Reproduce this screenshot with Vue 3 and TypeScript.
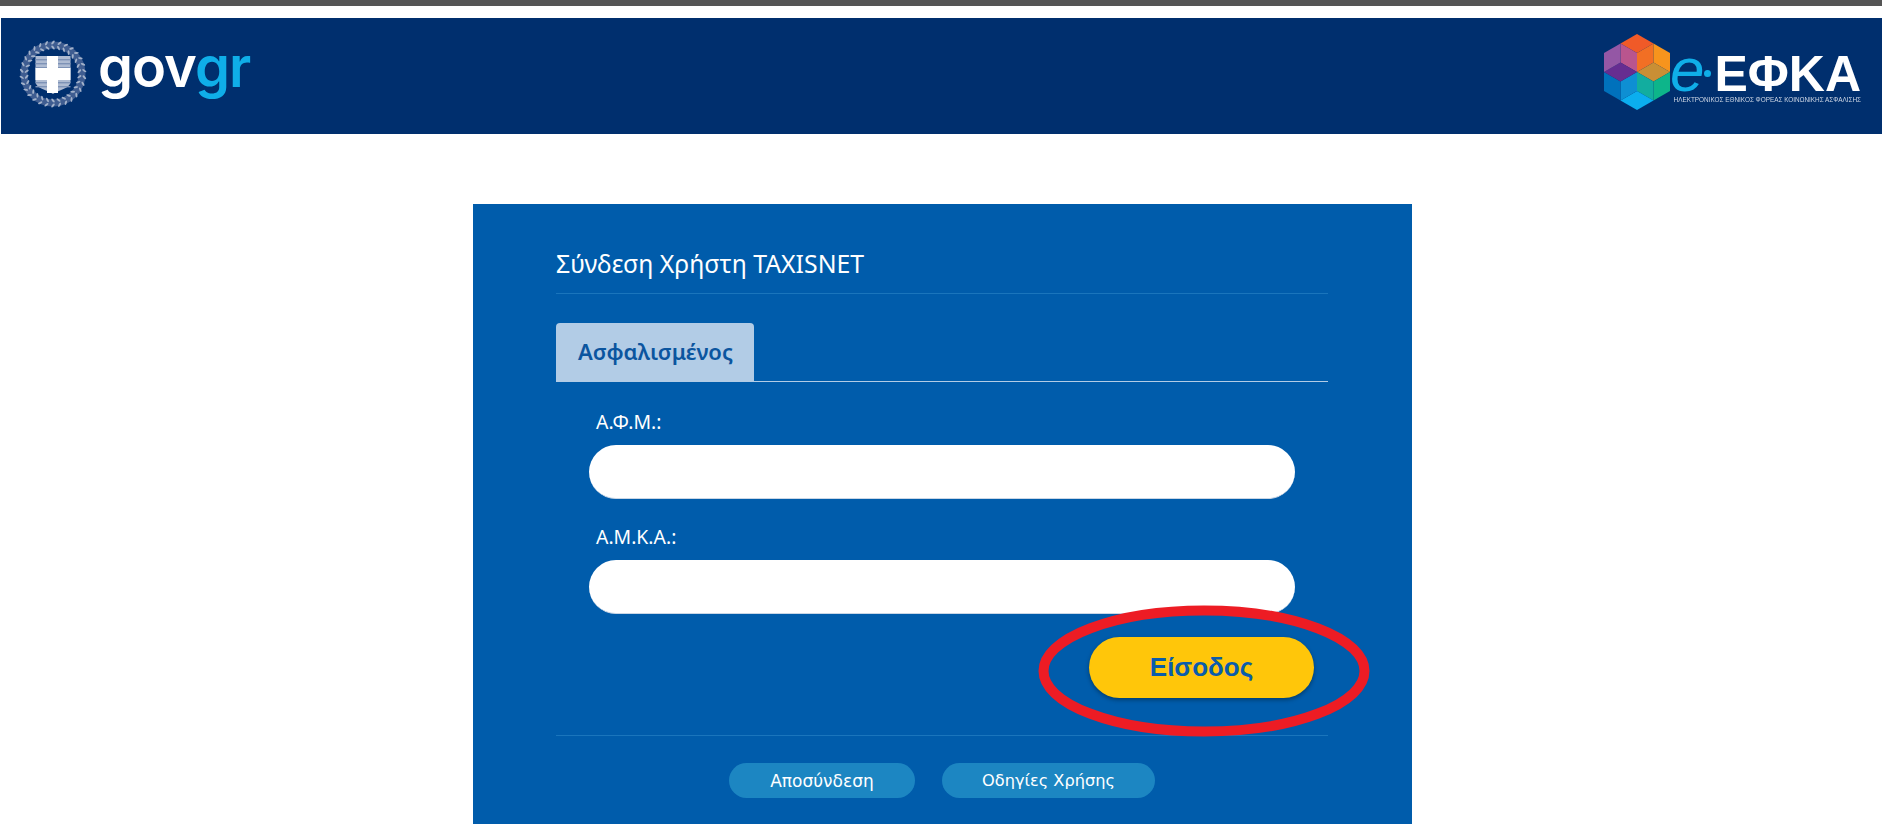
<script setup lang="ts">
const facets = [
  { points: '0,-38 16.5,-28.5 0,-19 -16.5,-28.5', fill: '#f05a28' },
  { points: '-16.5,-28.5 0,-19 0,0 -16.5,-9.5', fill: '#b9558e' },
  { points: '16.5,-28.5 0,-19 0,0 16.5,-9.5', fill: '#f26f24' },
  { points: '16.5,-28.5 33,-19 33,0 16.5,-9.5', fill: '#f7941d' },
  { points: '0,0 16.5,-9.5 33,0 16.5,9.5', fill: '#c98f35' },
  { points: '33,0 33,19 16.5,28.5 16.5,9.5', fill: '#0db58a' },
  { points: '0,0 16.5,9.5 16.5,28.5 0,19', fill: '#12ad9f' },
  { points: '0,38 16.5,28.5 0,19 -16.5,28.5', fill: '#0baeef' },
  { points: '0,0 0,19 -16.5,28.5 -16.5,9.5', fill: '#0e8fd3' },
  { points: '-33,0 -16.5,9.5 -16.5,28.5 -33,19', fill: '#0071bc' },
  { points: '0,0 -16.5,9.5 -33,0 -16.5,-9.5', fill: '#662d91' },
  { points: '-33,-19 -16.5,-28.5 -16.5,-9.5 -33,0', fill: '#9457a5' },
]

const leaves = Array.from({ length: 30 }, (_, i) => (i * 360) / 30)
const stripes = [-15, -11, -7, 8, 12]
</script>

<template>
  <div class="page">
    <div class="topbar"></div>
    <header class="header">
      <div class="gov-logo">
        <svg class="emblem" width="68" height="68" viewBox="-34 -34 68 68">
          <circle r="29" fill="none" stroke="#3f5d91" stroke-width="7" />
          <g v-for="a in leaves" :key="a" :transform="`rotate(${a})`" fill="#a3b2ca">
            <ellipse cx="0" cy="-31.5" rx="1" ry="2.4" transform="rotate(40 0 -31.5)" />
            <ellipse cx="0" cy="-26.5" rx="1" ry="2.4" transform="rotate(-40 0 -26.5)" />
          </g>
          <path d="M-17.5 -18H17.5V8C17.5 14 6 16 0 20C-6 16 -17.5 14 -17.5 8Z" fill="#aebbd2" />
          <rect v-for="y in stripes" :key="y" x="-17.5" :y="y" width="35" height="1.4" fill="#7d92b6" />
          <path d="M-6 -18H5V-6H17.5V6H5V19H-6V6H-17.5V-6H-6Z" fill="#fff" />
        </svg>
        <span class="gov-word">gov<span class="gov-gr">gr</span></span>
      </div>
      <div class="efka-logo">
        <svg class="hex" width="68" height="78" viewBox="-34 -39 68 78">
          <polygon v-for="f in facets" :key="f.points" :points="f.points" :fill="f.fill" />
        </svg>
        <div class="efka-text">
          <div class="efka-word"><span class="efka-e">e</span><span class="efka-dot"></span>ΕΦΚΑ</div>
          <div class="efka-sub">ΗΛΕΚΤΡΟΝΙΚΟΣ ΕΘΝΙΚΟΣ ΦΟΡΕΑΣ ΚΟΙΝΩΝΙΚΗΣ ΑΣΦΑΛΙΣΗΣ</div>
        </div>
      </div>
    </header>

    <main class="panel">
      <h1 class="title">Σύνδεση Χρήστη TAXISNET</h1>
      <div class="tabs">
        <div class="tab">Ασφαλισμένος</div>
      </div>
      <form class="form" @submit.prevent>
        <label class="label" for="afm">Α.Φ.Μ.:</label>
        <input id="afm" class="field" type="text" />
        <label class="label" for="amka">Α.Μ.Κ.Α.:</label>
        <input id="amka" class="field" type="text" />
        <div class="submit-row">
          <button class="submit" type="submit">Είσοδος</button>
          <svg class="ring" width="332" height="132" viewBox="0 0 332 132">
            <ellipse cx="166" cy="66" rx="160.5" ry="60.5" fill="none" stroke="#ed1c24" stroke-width="10" />
          </svg>
        </div>
      </form>
      <footer class="actions">
        <button class="action logout" type="button">Αποσύνδεση</button>
        <button class="action guide" type="button">Οδηγίες Χρήσης</button>
      </footer>
    </main>
  </div>
</template>

<style scoped>
.page {
  width: 1882px;
  height: 838px;
  overflow: hidden;
  background: #fff;
  font-family: "Noto Sans", "Open Sans", sans-serif;
}
.topbar {
  height: 6px;
  background: #555;
}
.header {
  height: 116px;
  margin: 12px 0 0 1px;
  padding: 22px 21px 0 18px;
  box-sizing: border-box;
  display: flex;
  justify-content: space-between;
  align-items: flex-start;
  background: #002f6e;
}
.gov-logo {
  display: flex;
  align-items: flex-start;
  gap: 11px;
  filter: blur(0.5px);
}
.emblem {
  flex-shrink: 0;
}
.gov-word {
  font-family: Inter, sans-serif;
  font-size: 56px;
  font-weight: 600;
  line-height: 60px;
  letter-spacing: -1px;
  color: #fff;
  margin-top: -3px;
}
.gov-gr {
  color: #0faee8;
}
.efka-logo {
  display: flex;
  align-items: flex-start;
  gap: 2px;
  margin-top: -7px;
  filter: blur(0.5px);
}
.efka-text {
  width: 188px;
  height: 85px;
  display: flex;
  flex-direction: column;
  align-items: flex-end;
  justify-content: flex-end;
}
.efka-word {
  display: flex;
  align-items: baseline;
  height: 46px;
  margin-bottom: 3px;
  font-family: "Liberation Sans", sans-serif;
  font-size: 50px;
  font-weight: 700;
  line-height: 46px;
  color: #fff;
  white-space: nowrap;
}
.efka-e {
  font-size: 62px;
  line-height: 46px;
  font-style: italic;
  font-weight: 400;
  color: #0faee8;
}
.efka-dot {
  width: 7px;
  height: 7px;
  margin: 0 3px 0 0;
  border-radius: 50%;
  background: #0faee8;
  transform: translateY(-14px);
}
.efka-sub {
  font-family: "Liberation Sans", sans-serif;
  font-size: 6.4px;
  line-height: 8px;
  margin-bottom: 14px;
  color: #cfd8e6;
  white-space: nowrap;
}
.panel {
  width: 939px;
  height: 620px;
  margin: 70px 0 0 473px;
  padding: 0 84px 0 83px;
  box-sizing: border-box;
  display: flex;
  flex-direction: column;
  background: #005cab;
  color: #fff;
}
.title {
  margin: 0;
  height: 90px;
  padding-top: 42px;
  box-sizing: border-box;
  font-size: 24.8px;
  font-weight: 400;
  line-height: 34px;
  border-bottom: 1px solid #1a75bc;
}
.tabs {
  margin-top: 29px;
  border-bottom: 1px solid #b2cce6;
  display: flex;
}
.tab {
  width: 198px;
  height: 58px;
  box-sizing: border-box;
  padding-left: 22px;
  border-radius: 4px 4px 0 0;
  background: #b2cce6;
  color: #0b559f;
  font-size: 22px;
  font-weight: 600;
  line-height: 56px;
}
.form {
  display: flex;
  flex-direction: column;
  padding: 0 33px;
}
.label {
  margin: 28px 0 11px 7px;
  font-size: 19.4px;
  line-height: 24px;
}
.label + .field + .label {
  margin-top: 26px;
}
.field {
  height: 54px;
  padding: 0 20px;
  box-sizing: border-box;
  border: none;
  border-bottom: 1px solid #c9d6e6;
  border-radius: 27px;
  background: #fff;
  outline: none;
}
.submit-row {
  position: relative;
  display: flex;
  justify-content: flex-end;
  margin: 23px -19px 0 0;
}
.submit {
  width: 225px;
  height: 61px;
  border: none;
  border-radius: 31px;
  background: #ffc60a;
  box-shadow: 0 2px 4px rgba(0, 0, 0, 0.35);
  color: #0b5cab;
  font-family: "Liberation Sans", sans-serif;
  font-size: 26px;
  font-weight: 700;
}
.ring {
  position: absolute;
  right: -56px;
  top: -32px;
  pointer-events: none;
}
.actions {
  margin-top: 37px;
  flex: 1;
  padding-top: 27px;
  box-sizing: border-box;
  border-top: 1px solid #1a75bc;
  display: flex;
  align-items: flex-start;
  justify-content: center;
  gap: 27px;
}
.action {
  height: 35px;
  border: none;
  border-radius: 18px;
  background: #1c86c2;
  color: #fff;
  font-family: "DejaVu Sans", sans-serif;
  font-size: 17px;
}
.logout {
  width: 186px;
}
.guide {
  width: 213px;
  font-size: 16.2px;
}
</style>
